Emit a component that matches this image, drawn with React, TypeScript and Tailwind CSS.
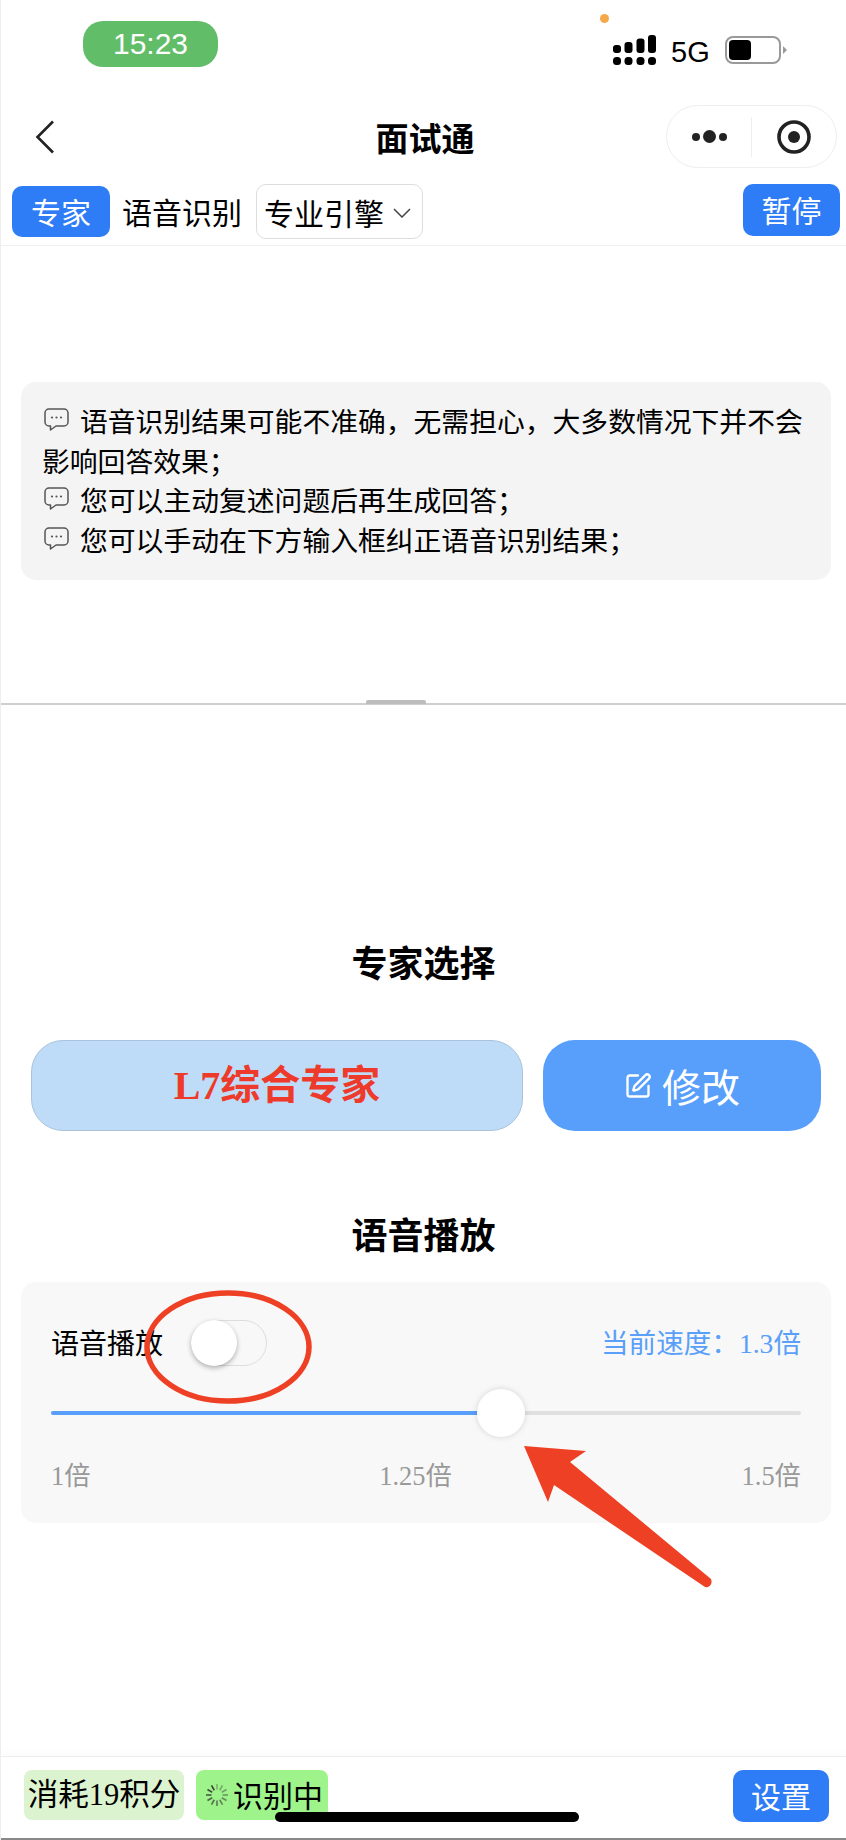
import React from "react";
import { SquarePen } from "lucide-react";

const Bubble = () => (
  <svg viewBox="0 0 25 23" width="25" height="23" fill="none" className="inline-block align-[1px] mr-[11px] ml-[2px]">
    <path d="M5 1h15a4 4 0 0 1 4 4v9a4 4 0 0 1-4 4h-8l-5.5 4v-4H5a4 4 0 0 1-4-4V5a4 4 0 0 1 4-4z" stroke="#555" strokeWidth="1.5" strokeLinejoin="round" />
    <circle cx="8" cy="9.5" r="1.1" fill="#555" />
    <circle cx="12.5" cy="9.5" r="1.1" fill="#555" />
    <circle cx="17" cy="9.5" r="1.1" fill="#555" />
  </svg>
);

const Spinner = () => (
  <svg viewBox="0 0 26 26" width="26" height="26" className="shrink-0">
    {Array.from({ length: 12 }).map((_, i) => (
      <line key={i} x1="13" y1="2" x2="13" y2="7.5" stroke="#3a3a3a" strokeOpacity={0.35 + (i % 12) * 0.055} strokeWidth="1.6" transform={`rotate(${i * 30} 13 13)`} />
    ))}
  </svg>
);

export default function App() {
  return (
    <div className="relative w-[846px] h-[1840px] overflow-hidden bg-white border-l border-[#eeeeee] text-black font-['Liberation_Serif','Noto_Sans_CJK_SC',serif]">
      {/* Status bar */}
      <div className="flex items-start h-[105px] font-['Liberation_Sans','Noto_Sans_CJK_SC',sans-serif]">
        <div className="mt-[21px] ml-[82px] w-[135px] h-[46px] rounded-[20px] bg-[#62bd68] text-white text-[30px] leading-[46px] text-center">15:23</div>
        <div className="flex items-start ml-auto mr-[59px] mt-[35px]">
          <svg width="45" height="30" viewBox="0 0 45 30" fill="#000" className="mr-[15px]">
            <rect x="2" y="10" width="8" height="8" rx="3" />
            <rect x="13.5" y="7" width="8" height="11" rx="3" />
            <rect x="25.5" y="3.5" width="8" height="14.5" rx="3" />
            <rect x="37" y="0" width="8" height="18" rx="3" />
            <rect x="2" y="22" width="8" height="8" rx="3.5" />
            <rect x="13.5" y="22" width="8" height="8" rx="3.5" />
            <rect x="25.5" y="22" width="8" height="8" rx="3.5" />
            <rect x="37" y="22" width="8" height="8" rx="3.5" />
          </svg>
          <span className="text-[29px] leading-[32px] mt-[1px] mr-[16px] w-[38px]">5G</span>
          <div className="relative w-[56px] h-[28px] mt-[1px] rounded-[8px] border-[2px] border-[#999999] p-[2px]">
            <div className="w-[22px] h-[20px] rounded-[4px] bg-black" />
          </div>
          <div className="w-0 h-0 ml-[2px] mt-[11px] border-y-[4px] border-y-transparent border-l-[4px] border-l-[#999999]" />
        </div>
      </div>

      {/* Nav */}
      <div className="grid grid-cols-[1fr_auto_1fr] items-center h-[79px] pb-[16px] px-[8px]">
        <svg width="20" height="34" viewBox="0 0 20 34" fill="none" className="ml-[26px]">
          <path d="M18 1.5 2.5 17 18 32.5" stroke="#222" strokeWidth="2.6" />
        </svg>
        <div className="ml-[3px] text-[33px] leading-[44px] font-semibold font-['Noto_Sans_CJK_SC',sans-serif]">面试通</div>
        <div className="justify-self-end flex items-center w-[171px] h-[63px] mr-[1px] rounded-full border border-[#eeeeee] bg-white">
          <div className="w-[84px] flex items-center justify-center gap-[3px] pl-[1px]">
            <span className="w-[8px] h-[8px] rounded-full bg-[#222]" />
            <span className="w-[13px] h-[13px] rounded-full bg-[#222]" />
            <span className="w-[8px] h-[8px] rounded-full bg-[#222]" />
          </div>
          <div className="w-px h-[40px] bg-[#eeeeee]" />
          <div className="flex-1 flex items-center justify-center">
            <svg width="34" height="34" viewBox="0 0 34 34" fill="none">
              <circle cx="17" cy="17" r="15" stroke="#222" strokeWidth="3.6" />
              <circle cx="17" cy="17" r="6" fill="#222" />
            </svg>
          </div>
        </div>
      </div>

      {/* Tool row */}
      <div className="flex items-start h-[62px] border-b border-[#f0f0f0] font-['Noto_Sans_CJK_SC',sans-serif] text-[30px]">
        <div className="ml-[11px] mt-[2px] w-[98px] h-[51px] rounded-[10px] bg-[#2e7cf6] text-white text-center leading-[50px]">专家</div>
        <div className="ml-[12px] mt-[2px] leading-[50px]">语音识别</div>
        <div className="ml-[14px] w-[167px] h-[55px] rounded-[10px] border border-[#dddddd] flex items-center pl-[7px]">
          <span className="leading-[50px]">专业引擎</span>
          <svg width="18" height="10" viewBox="0 0 18 10" fill="none" className="ml-[9px] mt-[3px]">
            <path d="M1 1l8 8 8-8" stroke="#444" strokeWidth="1.5" />
          </svg>
        </div>
        <div className="ml-auto mr-[6px] w-[97px] h-[52px] rounded-[10px] bg-[#2e7cf6] text-white text-center leading-[50px]">暂停</div>
      </div>

      {/* Upper pane */}
      <div className="h-[459px] pt-[136px] pl-[20px] pr-[15px] border-b-2 border-[#cfcfcf] relative font-['Noto_Sans_CJK_SC',sans-serif]">
        <div className="h-[198px] rounded-[15px] bg-[#f4f4f4] pt-[19px] pl-[21px] pr-[20px] text-[27.8px] leading-[39.5px]">
          <div><Bubble />语音识别结果可能不准确，无需担心，大多数情况下并不会影响回答效果；</div>
          <div><Bubble />您可以主动复述问题后再生成回答；</div>
          <div><Bubble />您可以手动在下方输入框纠正语音识别结果；</div>
        </div>
        <div className="absolute left-[365px] bottom-[-1px] w-[60px] h-[4px] rounded-t-[2px] bg-[#bdbdbd]" />
      </div>

      {/* Expert */}
      <div className="flex justify-center pt-[231px] text-[36px] leading-[50px] font-bold font-['Noto_Sans_CJK_SC',sans-serif]">专家选择</div>
      <div className="flex gap-[20px] mt-[54px] pl-[30px] pr-[24px]">
        <div className="w-[492px] h-[91px] rounded-[32px] bg-[#bedcf8] border border-[#a9c3dc] flex items-center justify-center text-[40px] font-bold text-[#ee3a2a]">L7综合专家</div>
        <div className="w-[278px] h-[91px] rounded-[32px] bg-[#589ffb] flex items-center justify-center text-white text-[39px] font-['Noto_Sans_CJK_SC',sans-serif]">
          <SquarePen size={28} strokeWidth={2} className="mr-[10px]" />
          修改
        </div>
      </div>

      {/* Voice */}
      <div className="flex justify-center mt-[77px] text-[36px] leading-[50px] font-bold font-['Noto_Sans_CJK_SC',sans-serif]">语音播放</div>
      <div className="ml-[20px] mr-[15px] mt-[24px] h-[241px] rounded-[15px] bg-[#f8f8f8] pl-[30px] pr-[30px] pt-[38px]">
        <div className="flex items-center h-[46px]">
          <span className="text-[28px] leading-[46px] mt-[-2px] font-['Noto_Sans_CJK_SC',sans-serif]">语音播放</span>
          <div className="relative ml-[28px] w-[76px] h-[46px] rounded-full border border-[#dddddd]">
            <div className="absolute left-[-1px] top-[-1px] w-[46px] h-[46px] rounded-full bg-white shadow-[0_2px_5px_rgba(0,0,0,0.3)]" />
          </div>
          <span className="ml-auto text-[27.6px] leading-[46px] mt-[2px] text-[#5a9ff8]">当前速度：1.3倍</span>
        </div>
        <div className="relative mt-[45px] h-[4px] bg-[#e0e0e0] rounded-full">
          <div className="h-full w-[428px] bg-[#589ffb] rounded-l-full" />
          <div className="absolute left-[426px] top-[-22px] w-[48px] h-[48px] rounded-full bg-white shadow-[0_0_6px_rgba(0,0,0,0.15)]" />
        </div>
        <div className="flex justify-between mt-[39px] text-[26.4px] leading-[44px] text-[#999999]">
          <span>1倍</span>
          <span className="ml-[-1px]">1.25倍</span>
          <span>1.5倍</span>
        </div>
      </div>

      {/* Footer */}
      <div className="absolute left-0 right-0 bottom-0 h-[84px] border-t border-[#eeeeee] border-b-2 border-b-[#888888] bg-white shadow-[0_-4px_8px_rgba(0,0,0,0.02)] flex items-start text-[30px] pt-[13px]">
        <div className="ml-[23px] w-[160px] h-[50px] rounded-[8px] bg-[#dcf3d0] text-center text-[30.5px] leading-[50px]">消耗19积分</div>
        <div className="ml-[12px] w-[132px] h-[50px] rounded-[8px] bg-[#9ef38a] flex items-center pl-[8px] leading-[44px] font-['Noto_Sans_CJK_SC',sans-serif]">
          <Spinner />
          <span className="ml-[3px] mt-[-3px]">识别中</span>
        </div>
        <div className="ml-auto mr-[17px] w-[96px] h-[52px] rounded-[10px] bg-[#2e7cf6] text-white text-center leading-[50px] font-['Noto_Sans_CJK_SC',sans-serif]">设置</div>
      </div>

      {/* Overlays: photo annotations and system chrome */}
      <div className="absolute left-[599px] top-[14px] w-[9px] h-[9px] rounded-full bg-[#f6a94a]" />
      <div className="absolute left-[274px] top-[1812px] w-[304px] h-[10px] rounded-full bg-black" />
      <svg className="absolute left-[138px] top-[1285px]" width="180" height="125" viewBox="0 0 180 125" fill="none">
        <ellipse cx="89" cy="62" rx="81" ry="54" stroke="#ee4024" strokeWidth="5.5" />
      </svg>
      <svg className="absolute left-[520px] top-[1440px]" width="200" height="155" viewBox="0 0 200 155">
        <path d="M3 6 65 11 49 22 190 139C192 144 188 148 184 147L33 45 27 62Z" fill="#ee4024" />
      </svg>
    </div>
  );
}
